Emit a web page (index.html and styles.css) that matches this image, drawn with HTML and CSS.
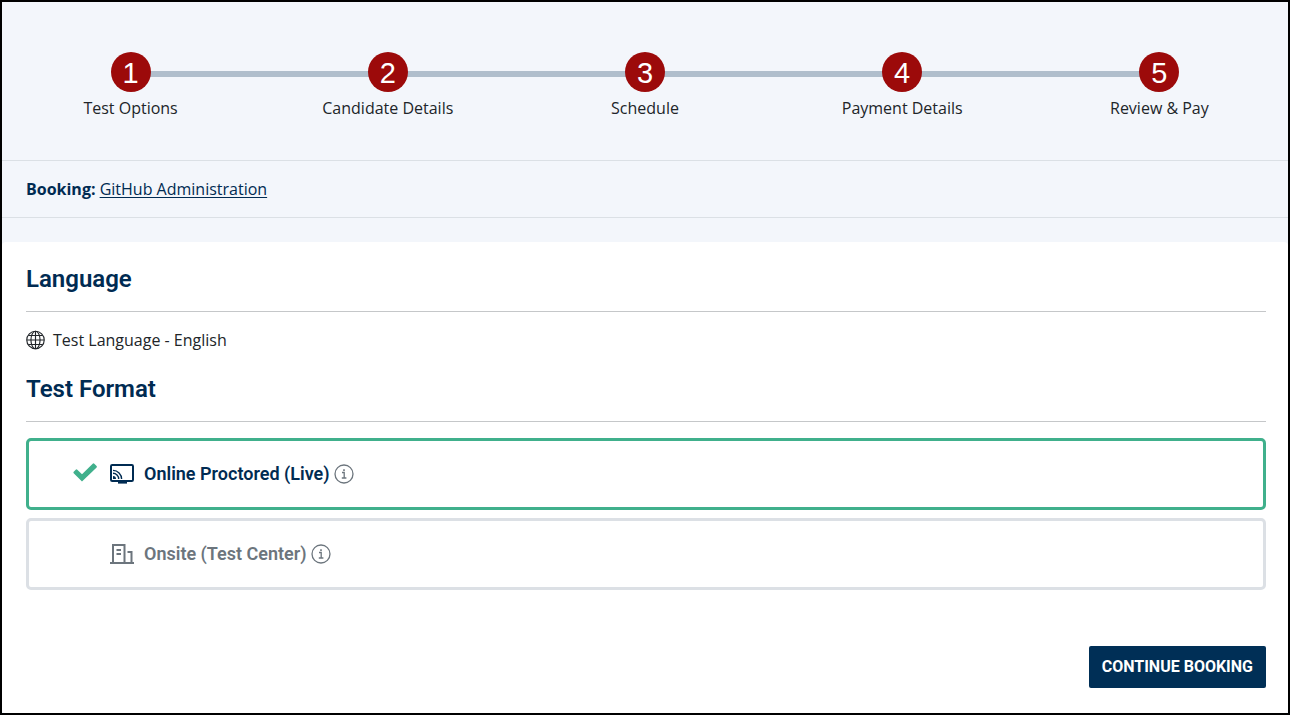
FILE: index.html
```html
<!DOCTYPE html>
<html lang="en">
<head>
<meta charset="utf-8">
<meta name="viewport" content="width=device-width, initial-scale=1">
<title>Test Options</title>
<link rel="stylesheet" href="styles.css">
</head>
<body>
<div class="page">
  <ol class="steps">
    <li class="step"><span class="step-number">1</span><span class="step-label">Test Options</span></li>
    <li class="step"><span class="step-number">2</span><span class="step-label">Candidate Details</span></li>
    <li class="step"><span class="step-number">3</span><span class="step-label">Schedule</span></li>
    <li class="step"><span class="step-number">4</span><span class="step-label">Payment Details</span></li>
    <li class="step"><span class="step-number">5</span><span class="step-label">Review &amp; Pay</span></li>
  </ol>
  <div class="booking"><strong>Booking:</strong> <a class="booking-link" href="#">GitHub Administration</a></div>
  <main class="panel">
    <h2 class="section-title">Language</h2>
    <p class="language">
      <svg class="globe" viewBox="0 0 20 20" aria-hidden="true"><circle cx="10" cy="10" r="9.2"/><ellipse cx="10" cy="10" rx="4.8" ry="9.2"/><path d="M10 1v18M1 10h18M2.6 5.3h14.8M2.6 14.7h14.8"/></svg>
      <span>Test Language - English</span>
    </p>
    <h2 class="section-title">Test Format</h2>
    <form class="options">
      <div class="option">
        <input class="option-radio" type="radio" name="format" id="online" checked>
        <svg class="option-icon" viewBox="0 0 26 24" aria-hidden="true"><rect x="2" y="3" width="22" height="16" rx="1.2" fill="none" stroke="currentColor" stroke-width="2"/><path d="M9 19h9v2.6H9z" fill="currentColor"/><path d="M4 8.4a8.6 8.6 0 0 1 8.6 8.6M4 11.3A5.7 5.7 0 0 1 9.7 17" fill="none" stroke="currentColor" stroke-width="1.4"/><path d="M4 14A3 3 0 0 1 7 17H4z" fill="currentColor"/></svg>
        <label class="option-label" for="online">Online Proctored (Live)</label>
        <button class="info" type="button" aria-label="About online proctored tests"><svg class="info-icon" viewBox="0 0 20 20" aria-hidden="true"><circle cx="10" cy="10" r="9"/><path d="M8 8.5h2.2v5.3M7.8 14h4.6"/><path class="dot" d="M9.2 5.3h1.6v1.6H9.2z"/></svg></button>
      </div>
      <div class="option">
        <input class="option-radio" type="radio" name="format" id="onsite">
        <svg class="option-icon" viewBox="0 0 26 24" aria-hidden="true"><path d="M1 21h24M4 21V3h11.5v18M18.5 10h4v11" fill="none" stroke="currentColor" stroke-width="2"/><path d="M7.5 8h4.5M7.5 12h4.5" fill="none" stroke="currentColor" stroke-width="2"/></svg>
        <label class="option-label" for="onsite">Onsite (Test Center)</label>
        <button class="info" type="button" aria-label="About onsite tests"><svg class="info-icon" viewBox="0 0 20 20" aria-hidden="true"><circle cx="10" cy="10" r="9"/><path d="M8 8.5h2.2v5.3M7.8 14h4.6"/><path class="dot" d="M9.2 5.3h1.6v1.6H9.2z"/></svg></button>
      </div>
      <button class="continue" type="submit">CONTINUE BOOKING</button>
    </form>
  </main>
</div>
</body>
</html>
```
FILE: styles.css
```css
* { box-sizing: border-box; }

body {
  margin: 0;
  background: #f3f6fb;
  color: #212529;
  font: 400 16px/24px "Open Sans", "Noto Sans", sans-serif;
}

.page {
  display: flex;
  flex-direction: column;
  min-height: 100vh;
  border: 2px solid #000;
}

.steps {
  display: grid;
  grid-template-columns: repeat(5, 1fr);
  margin: 0;
  padding: 50px 0 40px;
  border-bottom: 1px solid #dbe0e5;
  list-style: none;
}

.step {
  display: flex;
  flex-direction: column;
  align-items: center;
  gap: 4px;
  background: linear-gradient(#b0becc, #b0becc) no-repeat 0 19px / 100% 6px;
}

.step:first-child { background-position: 100% 19px; background-size: 50% 6px; }
.step:last-child { background-size: 50% 6px; }

.step-number {
  width: 40px;
  height: 40px;
  border-radius: 50%;
  background: #9c0a0a;
  color: #fff;
  font: 400 29px/42px "Liberation Sans", Arial, sans-serif;
  text-align: center;
}

.booking {
  padding: 16px 24px;
  border-bottom: 1px solid #dbe0e5;
  color: #002b52;
}

.booking strong { font-weight: 700; }

.booking-link {
  color: inherit;
  text-underline-offset: 2px;
}

.panel {
  flex: 1;
  margin-top: 24px;
  padding: 20px 22px 24px 24px;
  border-radius: 4px;
  background: #fff;
}

.section-title {
  margin: 0 0 16px;
  padding-bottom: 14px;
  border-bottom: 1px solid #c5c7c9;
  color: #002b52;
  font: 600 24px/35px Roboto, sans-serif;
}

.language {
  display: flex;
  align-items: center;
  gap: 8px;
  margin: 0 0 20px;
}

.globe {
  width: 19px;
  height: 20px;
  fill: none;
  stroke: #212529;
  stroke-width: 1.2;
}

.options {
  display: flex;
  flex-direction: column;
  gap: 8px;
}

.option {
  display: flex;
  align-items: center;
  min-height: 72px;
  padding: 0 44px;
  border: 3px solid #dce0e5;
  border-radius: 5px;
  color: #6c757d;
}

.option:has(:checked) {
  border-color: #40b08c;
  color: #002b52;
}

.option-radio {
  appearance: none;
  width: 24px;
  height: 24px;
  margin: 0 12px 0 0;
}

.option-radio:checked {
  background: #40b08c;
  clip-path: path("M0.7 9.7 L2.7 7.7 Q3.5 7 4.3 7.7 L9 12.3 L19.7 1.7 Q20.5 1 21.3 1.7 L23.6 4 Q24.3 4.7 23.6 5.5 L9 19.5 L0.7 11.3 Q0 10.5 0.7 9.7 Z");
}

.option-icon {
  width: 26px;
  height: 24px;
}

.option-label {
  margin: 0 4px 0 9px;
  font: 600 18px/24px Roboto, sans-serif;
}

.info {
  display: flex;
  padding: 0;
  border: 0;
  background: none;
}

.info-icon {
  width: 20px;
  height: 20px;
  fill: none;
  stroke: #6c757d;
  stroke-width: 1.3;
}

.info-icon .dot {
  fill: #6c757d;
  stroke: none;
}

.continue {
  align-self: flex-end;
  margin-top: 48px;
  padding: 9px 13px;
  border: 0;
  border-radius: 2px;
  background: #002f56;
  color: #fff;
  font: 700 16px/24px Roboto, sans-serif;
}
```
